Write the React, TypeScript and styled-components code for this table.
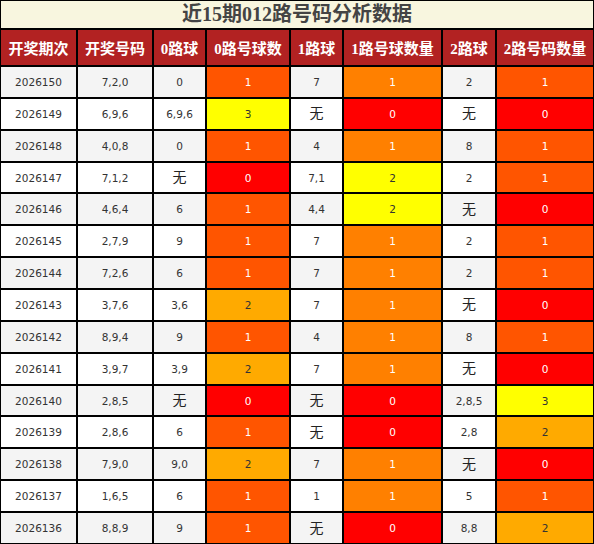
import styled, { createGlobalStyle } from 'styled-components';

const GlobalStyle = createGlobalStyle`
  html, body {
    margin: 0;
    padding: 0;
    background: #fff;
  }
`;

interface IDraw {
  issue: string;
  numbers: string;
  road0: string;
  count0: number;
  road1: string;
  count1: number;
  road2: string;
  count2: number;
}

const NONE = '无';

const draws: Array<IDraw> = [
  { issue: '2026150', numbers: '7,2,0', road0: '0', count0: 1, road1: '7', count1: 1, road2: '2', count2: 1 },
  { issue: '2026149', numbers: '6,9,6', road0: '6,9,6', count0: 3, road1: NONE, count1: 0, road2: NONE, count2: 0 },
  { issue: '2026148', numbers: '4,0,8', road0: '0', count0: 1, road1: '4', count1: 1, road2: '8', count2: 1 },
  { issue: '2026147', numbers: '7,1,2', road0: NONE, count0: 0, road1: '7,1', count1: 2, road2: '2', count2: 1 },
  { issue: '2026146', numbers: '4,6,4', road0: '6', count0: 1, road1: '4,4', count1: 2, road2: NONE, count2: 0 },
  { issue: '2026145', numbers: '2,7,9', road0: '9', count0: 1, road1: '7', count1: 1, road2: '2', count2: 1 },
  { issue: '2026144', numbers: '7,2,6', road0: '6', count0: 1, road1: '7', count1: 1, road2: '2', count2: 1 },
  { issue: '2026143', numbers: '3,7,6', road0: '3,6', count0: 2, road1: '7', count1: 1, road2: NONE, count2: 0 },
  { issue: '2026142', numbers: '8,9,4', road0: '9', count0: 1, road1: '4', count1: 1, road2: '8', count2: 1 },
  { issue: '2026141', numbers: '3,9,7', road0: '3,9', count0: 2, road1: '7', count1: 1, road2: NONE, count2: 0 },
  { issue: '2026140', numbers: '2,8,5', road0: NONE, count0: 0, road1: NONE, count1: 0, road2: '2,8,5', count2: 3 },
  { issue: '2026139', numbers: '2,8,6', road0: '6', count0: 1, road1: NONE, count1: 0, road2: '2,8', count2: 2 },
  { issue: '2026138', numbers: '7,9,0', road0: '9,0', count0: 2, road1: '7', count1: 1, road2: NONE, count2: 0 },
  { issue: '2026137', numbers: '1,6,5', road0: '6', count0: 1, road1: '1', count1: 1, road2: '5', count2: 1 },
  { issue: '2026136', numbers: '8,8,9', road0: '9', count0: 1, road1: NONE, count1: 0, road2: '8,8', count2: 2 },
];

const columns = [
  { title: '开奖期次', width: 77 },
  { title: '开奖号码', width: 76 },
  { title: '0路球', width: 53 },
  { title: '0路号球数', width: 84 },
  { title: '1路球', width: 53 },
  { title: '1路号球数量', width: 99 },
  { title: '2路球', width: 54 },
  { title: '2路号码数量', width: 98 },
];

const Table = styled.table`
  width: 594px;
  height: 544px;
  table-layout: fixed;
  border-collapse: separate;
  border-spacing: 0;
`;

const TitleCell = styled.th`
  height: 27px;
  padding: 0;
  border: 1px solid #000;
  background-color: #f8f6df;
  color: #444;
  font-family: 'Liberation Serif', 'Noto Sans CJK SC', serif;
  font-size: 20px;
  font-weight: bold;
  text-align: center;
  line-height: 27px;
`;

const HeadCell = styled.th`
  height: 35px;
  padding: 0;
  border: 1px solid #000;
  background-color: #b22222;
  color: #fff;
  font-family: 'Liberation Serif', 'Noto Sans CJK SC', serif;
  font-size: 15px;
  font-weight: bold;
  text-align: center;
  white-space: nowrap;
`;

const Row = styled.tr<{ $striped: boolean }>`
  height: 31px;
  background-color: ${(p) => (p.$striped ? '#f4f4f4' : '#fff')};
`;

const Cell = styled.td`
  padding: 0;
  border: 1px solid #000;
  color: #333;
  font-family: 'DejaVu Sans', 'Noto Sans CJK SC', sans-serif;
  font-size: 10.5px;
  line-height: 14px;
  text-align: center;
  white-space: nowrap;
`;

// 红 → 黄 色阶，按列内数量大小取色
const CountCell = styled(Cell)<{ $green: number }>`
  background-color: rgb(255, ${(p) => p.$green}, 0);
  color: ${(p) => (p.$green >= 160 ? '#333' : '#fff')};
`;

const NoneMark = styled.span`
  font-size: 14px;
  line-height: 14px;
  color: #222;
`;

function Value({ text }: { text: string }) {
  return text === NONE ? <NoneMark>{text}</NoneMark> : <>{text}</>;
}

const max0 = Math.max(...draws.map((d) => d.count0));
const max1 = Math.max(...draws.map((d) => d.count1));
const max2 = Math.max(...draws.map((d) => d.count2));

function Count({ value, max }: { value: number; max: number }) {
  const green = Math.round((255 * value) / max);
  return <CountCell $green={green}>{value}</CountCell>;
}

function App() {
  return (
    <>
      <GlobalStyle />
      <Table>
        <colgroup>
          {columns.map((col) => (
            <col key={col.title} style={{ width: col.width }} />
          ))}
        </colgroup>
        <thead>
          <tr>
            <TitleCell colSpan={8}>近15期012路号码分析数据</TitleCell>
          </tr>
          <tr>
            {columns.map((col) => (
              <HeadCell key={col.title}>{col.title}</HeadCell>
            ))}
          </tr>
        </thead>
        <tbody>
          {draws.map((d, idx) => (
            <Row key={d.issue} $striped={idx % 2 === 0}>
              <Cell>{d.issue}</Cell>
              <Cell>{d.numbers}</Cell>
              <Cell>
                <Value text={d.road0} />
              </Cell>
              <Count value={d.count0} max={max0} />
              <Cell>
                <Value text={d.road1} />
              </Cell>
              <Count value={d.count1} max={max1} />
              <Cell>
                <Value text={d.road2} />
              </Cell>
              <Count value={d.count2} max={max2} />
            </Row>
          ))}
        </tbody>
      </Table>
    </>
  );
}

export default App;
